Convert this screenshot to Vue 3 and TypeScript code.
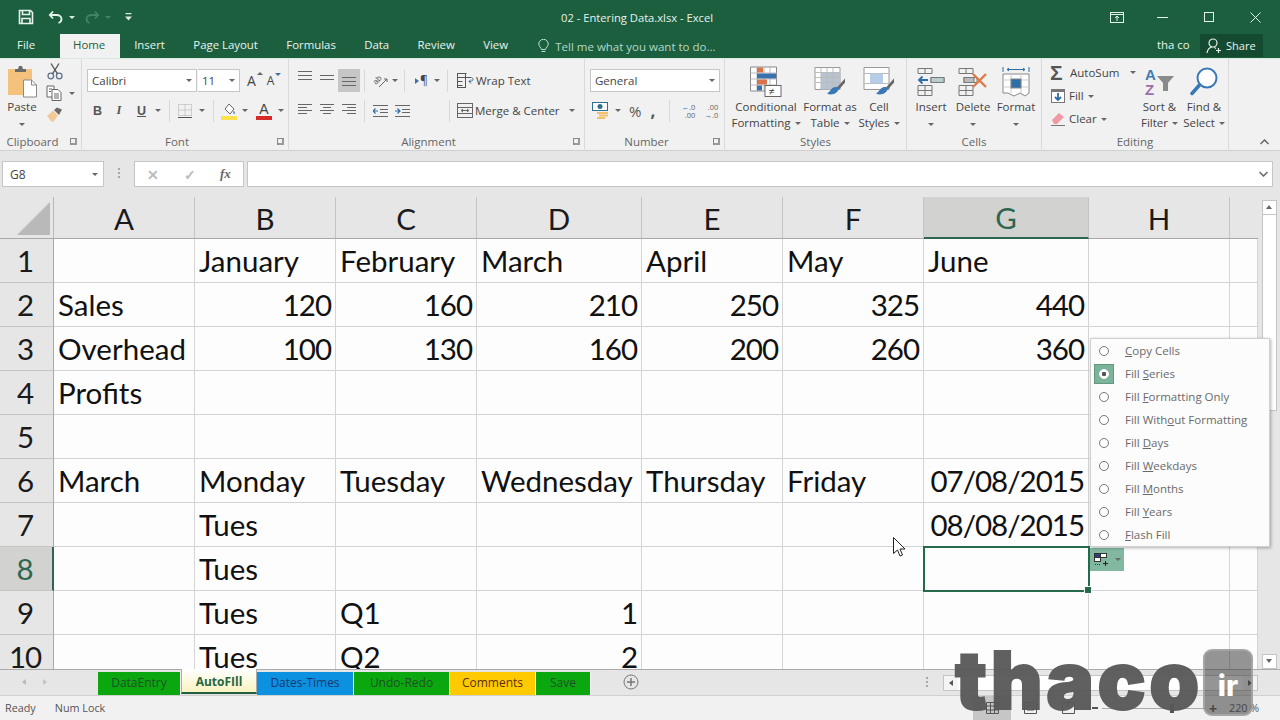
<template>
  <div class="app">
    <header class="titlebar">
      <div class="qat">
        <svg class="qat-save" width="16" height="16" viewBox="0 0 16 16" fill="none" stroke="#e6f2ec" stroke-width="1.6"><path d="M1.5 1.5h11l2 2v11h-13z" /><path d="M4.5 1.5v4h7v-4M4 14.5v-5h8v5" /></svg>
        <svg class="qat-undo" width="16" height="14" viewBox="0 0 16 14" fill="none" stroke="#e6f2ec" stroke-width="1.8"><path d="M5 1.5 1.8 5 5 8.5" /><path d="M2 5h6.5c3 0 5 1.8 5 4s-1.2 3.4-3 4" /></svg>
        <i class="caret caret-light qat-caret1"></i>
        <svg class="qat-redo" width="16" height="14" viewBox="0 0 16 14" fill="none" stroke="#3f8465" stroke-width="1.8"><path d="m11 1.5 3.2 3.5L11 8.5" /><path d="M14 5H7.5c-3 0-5 1.8-5 4s1.2 3.4 3 4" /></svg>
        <i class="caret caret-dim qat-caret2"></i>
        <svg class="qat-more" width="7" height="8" viewBox="0 0 7 8" fill="#dcebe4"><rect x="0.5" width="6" height="1.2" /><path d="M0 3.5h7L3.5 7.5z" /></svg>
      </div>
      <div class="doc-title">02 - Entering Data.xlsx - Excel</div>
      <div class="win-btns">
        <svg width="14" height="11" viewBox="0 0 14 11" fill="none" stroke="#e6f2ec"><rect x="0.5" y="0.5" width="13" height="10" /><path d="M0.5 2.5h13M7 9V4M5 6l2-2 2 2" /></svg>
        <svg class="win-min" width="11" height="1" viewBox="0 0 11 1"><rect width="11" height="1" fill="#e6f2ec" /></svg>
        <svg class="win-max" width="10" height="10" viewBox="0 0 10 10" fill="none" stroke="#e6f2ec"><rect x="0.5" y="0.5" width="9" height="9" /></svg>
        <svg class="win-close" width="11" height="11" viewBox="0 0 11 11" fill="none" stroke="#e6f2ec"><path d="m0.5 0.5 10 10M10.5 0.5l-10 10" /></svg>
      </div>
    </header>

    <nav class="tabs">
      <span class="tab tab-file">File</span>
      <span v-for="t in ribbonTabs" :key="t" class="tab" :class="{ active: t === 'Home' }">{{ t }}</span>
      <svg class="bulb" width="11" height="15" viewBox="0 0 11 15" fill="none" stroke="#bfe0cf"><path d="M3.5 10.5C3 8.5.8 7.5.8 5a4.7 4.7 0 0 1 9.4 0c0 2.5-2.2 3.5-2.7 5.5z" /><path d="M3.5 12.5h4" /></svg>
      <span class="tell">Tell me what you want to do...</span>
      <span class="user">tha co</span>
      <span class="share">
        <svg width="16" height="16" viewBox="0 0 16 16" fill="none" stroke="#e6f2ec" stroke-width="1.2"><circle cx="7" cy="5" r="4" /><path d="M1 15c.5-3.5 2.5-5.5 5-6M8 9.5c.8.2 1.5.6 2 1M12.5 10v5M10 12.5h5" /></svg>
        Share
      </span>
    </nav>

    <section class="ribbon">
      <div class="group g-clip">
        <div class="body clip-body">
          <div class="big paste">
            <svg width="30" height="32" viewBox="0 0 30 32"><rect x="1" y="3" width="24" height="26" fill="#f5c27d" /><path d="M8 3h3l1-3h3l1 3h3v3H8z" fill="#6b6b6b" /><path d="M16.5 14h8l5 5v12h-13z" fill="#fff" stroke="#8a8a8a" /><path d="M24.5 14v5h5" fill="none" stroke="#8a8a8a" /></svg>
            <span class="big-text">Paste</span>
            <i class="caret big-caret"></i>
          </div>
          <div class="clip-tools">
            <svg width="16" height="17" viewBox="0 0 16 17" fill="none" stroke="#5f7488" stroke-width="1.3"><circle cx="3.8" cy="13" r="2.8" /><circle cx="12.2" cy="13" r="2.8" /><path d="M5.5 10.8 12 .5M10.5 10.8 4 .5" stroke="#555" /></svg>
            <div class="copy">
              <svg width="16" height="16" viewBox="0 0 16 16" fill="#fff" stroke="#666"><path d="M1 1h7v11H1z" /><path d="M6 4.5h6l3 3v8H6z" /><path d="M3 4h3M3 6.5h2M8 9h5M8 11h5M8 13h5" fill="none" /></svg>
              <i class="caret"></i>
            </div>
            <svg width="16" height="15" viewBox="0 0 16 15"><path d="M0 9 6 3.5l5 5L6 15c-2-.5-3-1.5-3.5-3z" fill="#f3c99a" /><path d="m7 3 3-2.5 5 2-3 5.5z" fill="#6a6a6a" /></svg>
          </div>
        </div>
        <div class="label launcher">Clipboard<i class="launch"></i></div>
      </div>

      <div class="group g-font">
        <div class="body rows font-body">
          <div class="row">
            <div class="select select-font">Calibri<i class="caret"></i></div>
            <div class="select select-size">11<i class="caret"></i></div>
            <span class="grow-a">A<i class="tri-up"></i></span>
            <span class="shrink-a">A<i class="tri-down"></i></span>
          </div>
          <div class="row font-row2">
            <b class="fmt f-b">B</b>
            <em class="fmt f-i">I</em>
            <u class="fmt f-u">U</u>
            <i class="caret c-u"></i>
            <i class="sep s-a"></i>
            <svg class="ic-border" width="14" height="14" viewBox="0 0 14 14" fill="none" stroke="#aaa" stroke-dasharray="1 1"><path d="M.5.5h13v11H.5zM7 .5v11M.5 6h13" /><path d="M0 13.5h14" stroke="#555" stroke-dasharray="none" /></svg>
            <i class="caret c-b"></i>
            <i class="sep s-b"></i>
            <svg class="ic-fill" width="17" height="18" viewBox="0 0 17 18"><path d="m4 7 4-5 5 5-4 5z" fill="#fff" stroke="#666" /><path d="M12.5 8.5c1.5 1.5 2 3 1 3.5s-1.8-1-1-3.5z" fill="#5b8fc7" /><rect y="14" width="16" height="4" fill="#ffe14d" /></svg>
            <i class="caret c-f"></i>
            <span class="ic-color">A<i class="color-bar"></i></span>
            <i class="caret c-c"></i>
          </div>
        </div>
        <div class="label launcher">Font<i class="launch"></i></div>
      </div>

      <div class="group g-align">
        <div class="body rows align-body">
          <div class="row">
            <span class="al"><i class="lines top"></i></span>
            <span class="al"><i class="lines mid"></i></span>
            <span class="al on"><i class="lines bot"></i></span>
            <i class="sep s-c"></i>
            <svg class="ic-orient" width="15" height="15" viewBox="0 0 15 15" fill="none" stroke="#555"><text x="0" y="9" font-size="8" fill="#555" stroke="none" transform="rotate(-45 5 7)" font-family="Liberation Sans">ab</text><path d="M6 14 14 6M14 6h-3M14 6v3" stroke="#666" /></svg>
            <i class="caret c-o"></i>
            <i class="sep s-d"></i>
            <span class="pilcrow"><i class="tri-right"></i>¶</span>
            <i class="caret c-p"></i>
            <i class="sep s-e"></i>
            <svg class="ic-wrap" width="17" height="15" viewBox="0 0 17 15" fill="none" stroke="#555"><path d="M.5.5h9M.5 4.5h14M.5 8.5h5M.5 12.5h5" /><rect x=".5" y=".5" width="8" height="14" /><path d="M15 4.5c2 2 1 4-3 4M12 8.5l2-2M12 8.5l2 2" stroke="#3c6c9c" /></svg>
            <span class="tool-text">Wrap Text</span>
          </div>
          <div class="row">
            <span class="al"><i class="lines left"></i></span>
            <span class="al"><i class="lines center"></i></span>
            <span class="al"><i class="lines right"></i></span>
            <i class="sep s-c"></i>
            <svg class="ic-indent-a" width="15" height="12" viewBox="0 0 15 12" fill="none" stroke="#666"><path d="M0 .5h15M7 4.5h8M7 7.5h8M0 11.5h15" /><path d="M5 6H0M2.5 3.5 0 6l2.5 2.5" stroke="#2c6da8" stroke-width="1.2" /></svg>
            <svg class="ic-indent-b" width="15" height="12" viewBox="0 0 15 12" fill="none" stroke="#666"><path d="M0 .5h15M7 4.5h8M7 7.5h8M0 11.5h15" /><path d="M0 6h5M2.5 3.5 5 6 2.5 8.5" stroke="#2c6da8" stroke-width="1.2" /></svg>
            <i class="sep s-f"></i>
            <svg class="ic-merge" width="16" height="15" viewBox="0 0 16 15" fill="none" stroke="#666"><rect x=".5" y=".5" width="15" height="14" /><path d="M.5 4.5h15M.5 10.5h15M5 7.5h6M4 7.5l2-1.500M4 7.5 6 9M12 7.5 10 6M12 7.5 10 9" /></svg>
            <span class="tool-text">Merge &amp; Center</span>
            <i class="caret c-m"></i>
          </div>
        </div>
        <div class="label launcher">Alignment<i class="launch"></i></div>
      </div>

      <div class="group g-num">
        <div class="body rows num-body">
          <div class="row"><div class="select select-num">General<i class="caret"></i></div></div>
          <div class="row num-row2">
            <svg class="ic-cur" width="17" height="17" viewBox="0 0 17 17"><rect x=".5" y=".5" width="15" height="8" fill="#fff" stroke="#2e6f8e" /><circle cx="8" cy="4.5" r="2.5" fill="#2e6f8e" /><rect x="5" y="10" width="11" height="2" fill="#f0c070" /><rect x="7" y="12.5" width="9" height="2" fill="#f0c070" /><rect x="5" y="15" width="8" height="2" fill="#f0c070" /></svg>
            <i class="caret c-cur"></i>
            <span class="pct">%</span>
            <span class="comma">,</span>
            <i class="sep s-n"></i>
            <span class="dec"><span><i class="dec-arrow">←</i>.0</span><span>.00</span></span>
            <span class="dec dec2"><span>.00</span><span><i class="dec-arrow">→</i>.0</span></span>
          </div>
        </div>
        <div class="label launcher">Number<i class="launch"></i></div>
      </div>

      <div class="group g-styles">
        <div class="body bigs">
          <div class="big b-cond">
            <svg width="32" height="31" viewBox="0 0 32 31"><path d="M.5.5h26v24H.5z" fill="#fff" stroke="#888" /><path d="M.5 6.5h26M.5 12.5h26M.5 18.5h26M7 .5v24M14 .5v24M20 .5v24" stroke="#bbb" /><rect x="7" y="1" width="6" height="5" fill="#d9734a" /><rect x="7" y="7" width="19" height="5" fill="#3b72ad" /><rect x="7" y="13" width="10" height="5" fill="#d9734a" /><rect x="7" y="19" width="5" height="5" fill="#3b72ad" /><rect x="15" y="19" width="16" height="11" fill="#fff" stroke="#666" /><text x="19" y="28" font-size="10" fill="#333" font-family="Liberation Sans">≠</text></svg>
            <span class="big-text">Conditional<br />Formatting<i class="caret inline"></i></span>
          </div>
          <div class="big b-table">
            <svg width="32" height="31" viewBox="0 0 32 31"><path d="M1 1h25v22H1z" fill="#fff" stroke="#999" /><path d="M7 6h19v17H7z" fill="#b7c3d0" /><path d="M1 6h25M1 11h25M1 16h25M7 1v22M13 1v22M19 1v22" stroke="#bbb" /><path d="m31 12-8 9 2 2 6-7z" fill="#666" /><path d="M25 22c-1-2-5-2-7 0s-3 4-5 5c4 2 10 1 12-5z" fill="#3a78b5" /></svg>
            <span class="big-text">Format as<br />Table<i class="caret inline"></i></span>
          </div>
          <div class="big b-style">
            <svg width="32" height="31" viewBox="0 0 32 31"><path d="M1 1h25v22H1z" fill="#fff" stroke="#999" /><path d="M1 7h25M1 17h25" stroke="#bbb" /><rect x="7" y="7" width="13" height="10" fill="#b7cce6" /><path d="m31 12-8 9 2 2 6-7z" fill="#666" /><path d="M25 22c-1-2-5-2-7 0s-3 4-5 5c4 2 10 1 12-5z" fill="#3a78b5" /></svg>
            <span class="big-text">Cell<br />Styles<i class="caret inline"></i></span>
          </div>
        </div>
        <div class="label">Styles</div>
      </div>

      <div class="group g-cells">
        <div class="body bigs">
          <div class="big b-ins">
            <svg width="28" height="28" viewBox="0 0 28 28" fill="none" stroke="#777"><path d="M1 .5h14v5H1zM8 .5v5M1 17.5h14v10H1zM1 22.5h14M8 17.5v10M14 9.5h13v5H14zM20.5 9.5v5" /><rect x="14" y="9.5" width="13" height="5" fill="#bcc" /><path d="M11 12H2M5.5 8.5 2 12l3.5 3.5" stroke="#2c6da8" stroke-width="1.8" /></svg>
            <span class="big-text">Insert</span>
            <i class="caret big-caret"></i>
          </div>
          <div class="big b-del">
            <svg width="30" height="28" viewBox="0 0 30 28" fill="none" stroke="#777"><path d="M1 .5h14v5H1zM8 .5v5M1 17.5h14v10H1zM1 22.5h14M8 17.5v10M6 9.5h13v5H6z" /><rect x="6" y="9.5" width="10" height="5" fill="#bbb" /><path d="m15 6 13 13M28 6 15 19" stroke="#e07a4a" stroke-width="2.4" /></svg>
            <span class="big-text">Delete</span>
            <i class="caret big-caret"></i>
          </div>
          <div class="big b-fmt">
            <svg width="28" height="30" viewBox="0 0 28 30" fill="none" stroke="#888"><path d="M1 0v5M27 0v5M5 2.5h18M5 2.5l2-1.5M5 2.5 7 4M23 2.5 21 1M23 2.5 21 4" stroke="#2c6da8" /><path d="M1 7h26v19l-4 3-5-3-6 3-6-3H1z" fill="#fff" /><path d="M1 13h26M1 20h26M9 7v19M19 7v19" stroke="#ccc" /><rect x="9" y="12" width="10" height="9" fill="#2f6ea8" /></svg>
            <span class="big-text">Format</span>
            <i class="caret big-caret"></i>
          </div>
        </div>
        <div class="label">Cells</div>
      </div>

      <div class="group g-edit">
        <div class="body edit-body">
          <div class="edit-col">
            <div class="edit-row">
              <span class="sigma">Σ</span><span class="tool-text">AutoSum</span><i class="caret c-sum"></i>
            </div>
            <div class="edit-row">
              <svg width="14" height="14" viewBox="0 0 14 14"><rect x=".5" y=".5" width="13" height="13" fill="#fff" stroke="#777" /><rect width="14" height="3" fill="#777" /><path d="M7 4v7M4 8l3 3 3-3" fill="none" stroke="#2c6da8" stroke-width="1.8" /></svg>
              <span class="tool-text">Fill<i class="caret inline"></i></span>
            </div>
            <div class="edit-row">
              <svg width="14" height="14" viewBox="0 0 14 14"><path d="M1 8 8 1l5 4-7 7H3z" fill="#ef9aa4" /><path d="M0 13.5h14" stroke="#777" /></svg>
              <span class="tool-text">Clear<i class="caret inline"></i></span>
            </div>
          </div>
          <div class="big b-sort">
            <svg width="31" height="30" viewBox="0 0 31 30"><text x="1" y="13" font-size="15" font-weight="700" fill="#3f7cb8" font-family="Liberation Sans">A</text><text x="1" y="28" font-size="15" font-weight="700" fill="#9a6fa8" font-family="Liberation Sans">Z</text><path d="M13 9h17l-6 7v8h-5v-8z" fill="#8a8a8a" /></svg>
            <span class="big-text">Sort &amp;<br />Filter<i class="caret inline"></i></span>
          </div>
          <div class="big b-find">
            <svg width="28" height="30" viewBox="0 0 28 30" fill="none"><circle cx="17" cy="11" r="9.5" stroke="#3a78b5" stroke-width="2" fill="#fff" /><path d="M9.5 18 2 26.5" stroke="#3a78b5" stroke-width="3.5" stroke-linecap="round" /></svg>
            <span class="big-text">Find &amp;<br />Select<i class="caret inline"></i></span>
          </div>
        </div>
        <div class="label">Editing</div>
      </div>

      <svg class="collapse" width="9" height="6" viewBox="0 0 9 6" fill="none" stroke="#666" stroke-width="1.5"><path d="m.5 5 4-4 4 4" /></svg>
    </section>

    <section class="formula">
      <div class="namebox">G8<i class="caret"></i></div>
      <div class="dots"></div>
      <div class="fx-box">
        <span class="fx-x">✕</span>
        <span class="fx-v">✓</span>
        <span class="fx">fx</span>
      </div>
      <div class="input-box">
        <svg width="9" height="6" viewBox="0 0 9 6" fill="none" stroke="#666" stroke-width="1.5"><path d="m.5 1 4 4 4-4" /></svg>
      </div>
    </section>

    <main class="sheet-area">
      <div class="grid">
        <div class="corner"><i class="corner-tri"></i></div>
        <div v-for="c in columns" :key="c" class="col-h" :class="{ sel: c === 'G', blank: !c }">{{ c }}</div>
        <template v-for="(row, r) in rows" :key="r">
          <div class="row-h" :class="{ sel: r === 7 }">{{ r + 1 }}</div>
          <div
            v-for="(cell, c) in paddedRow(row)"
            :key="c"
            class="cell"
            :class="{ num: isRight(cell), selected: r === 7 && c === 6 }"
          >
            {{ cell }}<i v-if="r === 7 && c === 6" class="handle"></i>
          </div>
        </template>
      </div>
      <div class="vscroll">
        <div class="sb-btn"><i class="tri-up dark"></i></div>
        <div class="sb-thumb"></div>
        <div class="sb-track"></div>
        <div class="sb-btn"><i class="tri-down dark"></i></div>
      </div>
    </main>

    <section class="sheetbar">
      <div class="sheet-nav"><i class="tri-left"></i><i class="tri-right pale"></i></div>
      <div class="sheet-tabs">
        <span v-for="s in sheets" :key="s.name" class="sheet" :class="s.cls">{{ s.name }}</span>
      </div>
      <svg class="add-sheet" width="16" height="16" viewBox="0 0 16 16" fill="none" stroke="#777"><circle cx="8" cy="8" r="7" /><path d="M8 4v8M4 8h8" stroke-width="1.5" /></svg>
      <div class="hdots"></div>
      <div class="hscroll">
        <span class="hs-btn"><i class="tri-left dark"></i></span>
        <span class="hs-btn"><i class="tri-right dark"></i></span>
      </div>
    </section>

    <footer class="status">
      <span>Ready</span>
      <span class="numlock">Num Lock</span>
      <div class="view-btns">
        <span class="view on">
          <svg width="13" height="12" viewBox="0 0 13 12" fill="none" stroke="#555"><path d="M.5.5h12v11H.5zM.5 4h12M.5 8h12M4.5.5v11M8.5.5v11" /></svg>
        </span>
        <span class="view">
          <svg width="13" height="12" viewBox="0 0 13 12" fill="none" stroke="#555"><path d="M.5.5h12v11H.5zM3 4h7v4H3z" /></svg>
        </span>
        <span class="view">
          <svg width="13" height="12" viewBox="0 0 13 12" fill="none" stroke="#555"><path d="M.5.5h12v11H.5zM6.5.5v4" /></svg>
        </span>
      </div>
      <div class="zoom-slider"><i class="z-minus"></i><i class="z-line"><b class="z-thumb"></b></i><span class="z-plus">+</span></div>
      <span class="zoom-pct">220 %</span>
    </footer>

    <!-- fill options menu, sits over the grid -->
    <div class="fill-menu">
      <div v-for="(o, i) in fillOptions" :key="i" class="fill-item">
        <span class="radio-wrap" :class="{ on: i === 1 }"><i class="radio"></i></span>
        <span>{{ o[0] }}<u>{{ o[1] }}</u>{{ o[2] }}</span>
      </div>
    </div>
    <div class="smart-tag">
      <svg width="15" height="14" viewBox="0 0 15 14" fill="none" stroke="#333"><rect x=".5" y=".5" width="6" height="4" fill="#2b3f7a" /><rect x="6.5" y=".5" width="6" height="4" fill="#fff" /><rect x=".5" y="4.5" width="6" height="4" fill="#fff" /><path d="M1 11.5h6" stroke-dasharray="1 1" /><path d="M11.5 8v5M9 10.5h5" stroke="#222" /></svg>
      <i class="caret"></i>
    </div>

    <svg class="pointer" width="13" height="20" viewBox="0 0 13 20"><path d="M.5.5v16l4-3.5 2.5 6 2.5-1-2.5-6h5z" fill="#fff" stroke="#222" /></svg>

    <!-- channel logo burned into the recording -->
    <div class="logo-box">ir</div>
    <div class="logo-text">thaco</div>
  </div>
</template>

<script setup lang="ts">
type Cell = string | number

const ribbonTabs = ['Home', 'Insert', 'Page Layout', 'Formulas', 'Data', 'Review', 'View']
const columns = ['A', 'B', 'C', 'D', 'E', 'F', 'G', 'H', '']

const rows: Cell[][] = [
  ['', 'January', 'February', 'March', 'April', 'May', 'June'],
  ['Sales', 120, 160, 210, 250, 325, 440],
  ['Overhead', 100, 130, 160, 200, 260, 360],
  ['Profits'],
  [],
  ['March', 'Monday', 'Tuesday', 'Wednesday', 'Thursday', 'Friday', '07/08/2015'],
  ['', 'Tues', '', '', '', '', '08/08/2015'],
  ['', 'Tues'],
  ['', 'Tues', 'Q1', 1],
  ['', 'Tues', 'Q2', 2]
]

const sheets = [
  { name: 'DataEntry', cls: 'green' },
  { name: 'AutoFIll', cls: 'current' },
  { name: 'Dates-Times', cls: 'blue' },
  { name: 'Undo-Redo', cls: 'green' },
  { name: 'Comments', cls: 'yellow' },
  { name: 'Save', cls: 'green' }
]

// before, underlined access key, after
const fillOptions = [
  ['', 'C', 'opy Cells'],
  ['Fill ', 'S', 'eries'],
  ['Fill ', 'F', 'ormatting Only'],
  ['Fill With', 'o', 'ut Formatting'],
  ['Fill ', 'D', 'ays'],
  ['Fill ', 'W', 'eekdays'],
  ['Fill ', 'M', 'onths'],
  ['Fill ', 'Y', 'ears'],
  ['', 'F', 'lash Fill']
]

function paddedRow(row: Cell[]): Cell[] {
  return Array.from({ length: 9 }, (_, i) => row[i] ?? '')
}

function isRight(cell: Cell): boolean {
  return typeof cell === 'number' || cell.includes('/')
}
</script>

<style>
html,
body {
  margin: 0;
  background: #e6e6e6;
}
</style>

<style scoped>
.app {
  position: relative;
  width: 1280px;
  height: 720px;
  overflow: hidden;
  display: flex;
  flex-direction: column;
  font-family: 'Open Sans', 'Liberation Sans', sans-serif;
  font-size: 11.5px;
  color: #444;
}

i {
  font-style: normal;
}

/* title bar */
.titlebar {
  height: 34px;
  flex: none;
  background: #1b5f3f;
  display: flex;
  align-items: center;
  position: relative;
  color: #e8f2ed;
}
.qat {
  display: flex;
  align-items: center;
  padding-left: 18px;
  height: 28px;
}
.qat-undo {
  margin-left: 14px;
}
.qat-caret1 {
  margin-left: 5px;
}
.qat-redo {
  margin-left: 9px;
}
.qat-caret2 {
  margin-left: 5px;
}
.qat-more {
  margin-left: 14px;
}
.doc-title {
  position: absolute;
  left: 561px;
  top: 10px;
  font-size: 11.2px;
  white-space: nowrap;
}
.win-btns {
  margin-left: auto;
  padding-right: 19px;
  height: 28px;
  display: flex;
  align-items: center;
}
.win-min {
  margin-left: 33px;
}
.win-max {
  margin-left: 36px;
}
.win-close {
  margin-left: 36px;
}

.caret {
  display: inline-block;
  width: 0;
  height: 0;
  border-left: 3px solid transparent;
  border-right: 3px solid transparent;
  border-top: 3px solid #666;
  flex: none;
}
.caret.inline {
  margin-left: 4px;
  vertical-align: 2px;
}
.caret-light {
  border-top-color: #dcebe4;
}
.caret-dim {
  border-top-color: #3f8465;
}

/* ribbon tabs */
.tabs {
  height: 24px;
  flex: none;
  background: #1b5f3f;
  display: flex;
  align-items: center;
  color: #eaf3ee;
  position: relative;
  font-size: 11.4px;
}
.tab {
  height: 24px;
  line-height: 22px;
  padding: 0 14.2px;
  white-space: nowrap;
}
.tab-file {
  width: 60px;
  padding: 0 0 0 17px;
  box-sizing: border-box;
}
.tab.active {
  background: #f1f1f1;
  color: #1b5f3f;
  padding: 0 13px;
  width: 60px;
  box-sizing: border-box;
}
.bulb {
  margin-left: 16px;
}
.tell {
  margin-left: 6px;
  color: #b7d8c7;
  white-space: nowrap;
  font-size: 11.5px;
}
.user {
  position: absolute;
  left: 1157px;
  top: 0;
  line-height: 22px;
}
.share {
  position: absolute;
  left: 1200px;
  top: 0;
  width: 63px;
  height: 23px;
  background: #134a30;
  display: flex;
  align-items: center;
  gap: 4px;
  padding-left: 6px;
  box-sizing: border-box;
  font-size: 11px;
}

/* ribbon */
.ribbon {
  height: 93px;
  flex: none;
  background: #f1f1f1;
  border-top: 1px solid #d9ecdf;
  border-bottom: 1px solid #d0d0d0;
  box-sizing: border-box;
  display: flex;
  position: relative;
}
.group {
  height: 92px;
  box-sizing: border-box;
  border-right: 1px solid #dadada;
  display: flex;
  flex-direction: column;
}
.g-clip {
  width: 82px;
}
.g-font {
  width: 207px;
}
.g-align {
  width: 296px;
}
.g-num {
  width: 140px;
}
.g-styles {
  width: 182px;
}
.g-cells {
  width: 135px;
}
.g-edit {
  width: 187px;
}
.body {
  height: 74px;
  flex: none;
}
.label {
  height: 16px;
  line-height: 17px;
  text-align: center;
  color: #666;
  font-size: 11.5px;
  position: relative;
}
.label.launcher {
  padding-right: 16px;
}
.launch {
  position: absolute;
  right: 4px;
  top: 5px;
  width: 6px;
  height: 6px;
  border-left: 1px solid #888;
  border-top: 1px solid #888;
  box-shadow: inset -2px -2px 0 #999;
}
.rows {
  padding-top: 10px;
  box-sizing: border-box;
  display: flex;
  flex-direction: column;
  gap: 7px;
}
.row {
  height: 23px;
  display: flex;
  align-items: center;
}
.select {
  height: 23px;
  box-sizing: border-box;
  background: #fff;
  border: 1px solid #c6c6c6;
  display: flex;
  align-items: center;
  justify-content: space-between;
  padding: 0 4px;
  font-size: 11.5px;
}
.sep {
  width: 1px;
  height: 22px;
  background: #d8d8d8;
  flex: none;
}

/* big ribbon buttons */
.big {
  display: flex;
  flex-direction: column;
  align-items: center;
  flex: none;
  text-align: center;
  padding-top: 7px;
  box-sizing: border-box;
  height: 74px;
}
.big svg {
  height: 32px;
  flex: none;
}
.big-text {
  margin-top: 1px;
  line-height: 16px;
  white-space: nowrap;
}
.big-caret {
  margin-top: 8px;
}
.bigs {
  display: flex;
}

/* clipboard */
.clip-body {
  display: flex;
}
.paste {
  width: 44px;
}
.clip-tools {
  display: flex;
  flex-direction: column;
  gap: 7px;
  padding: 4px 0 0 2px;
  width: 36px;
}
.clip-tools > svg {
  margin-left: 1px;
}
.copy {
  display: flex;
  align-items: center;
  gap: 7px;
  margin-top: -2px;
  margin-bottom: -1px;
}

/* font */
.font-body {
  padding-left: 5px;
}
.select-font {
  width: 110px;
}
.select-size {
  width: 42px;
  margin-left: 1px;
  border-left: 0;
}
.grow-a,
.shrink-a {
  position: relative;
  font-size: 14px;
  color: #444;
}
.grow-a {
  margin-left: 7px;
}
.shrink-a {
  margin-left: 11px;
  font-size: 12px;
}
.tri-up,
.tri-down {
  position: absolute;
  left: 10px;
  top: 1px;
  width: 0;
  height: 0;
  border-left: 3px solid transparent;
  border-right: 3px solid transparent;
}
.tri-up {
  border-bottom: 3px solid #666;
}
.tri-down {
  border-top: 3px solid #3f6fa5;
  left: 8px;
}
.fmt {
  font-family: 'Liberation Sans', sans-serif;
  font-size: 12.5px;
  color: #555;
  width: 8px;
  text-align: center;
}
.f-b {
  margin-left: 6px;
}
.f-i {
  margin-left: 14px;
  font-family: 'Liberation Serif', serif;
  font-weight: 700;
}
.f-u {
  margin-left: 14px;
  font-weight: 700;
}
.c-u {
  margin-left: 10px;
}
.s-a {
  margin-left: 8px;
}
.ic-border {
  margin-left: 8px;
}
.c-b {
  margin-left: 7px;
}
.s-b {
  margin-left: 8px;
}
.ic-fill {
  margin-left: 7px;
}
.c-f {
  margin-left: 4px;
}
.ic-color {
  margin-left: 8px;
  width: 16px;
  text-align: center;
  font-family: 'Liberation Sans', sans-serif;
  font-size: 14px;
  line-height: 14px;
  color: #444;
  position: relative;
  height: 18px;
}
.color-bar {
  position: absolute;
  left: 0;
  right: 0;
  bottom: 0;
  height: 4px;
  background: #d92a2a;
}
.c-c {
  margin-left: 6px;
}

/* alignment */
.align-body {
  padding-left: 5px;
}
.al {
  width: 22px;
  height: 23px;
  flex: none;
  display: flex;
  align-items: center;
  justify-content: center;
}
.al.on {
  background: #c6c6c6;
}
.lines {
  display: block;
  width: 14px;
  height: 13px;
  position: relative;
  --ln: #666;
  background:
    linear-gradient(var(--ln), var(--ln)) 0 0 / 14px 1px no-repeat,
    linear-gradient(var(--ln), var(--ln)) 0 4px / 14px 1px no-repeat,
    linear-gradient(var(--ln), var(--ln)) 0 8px / 14px 1px no-repeat;
}
.lines.top {
  transform: translateY(-3px);
}
.lines.mid {
  transform: translateY(1px);
  background:
    linear-gradient(var(--ln), var(--ln)) 0 0 / 14px 1px no-repeat,
    linear-gradient(var(--ln), var(--ln)) 0 4px / 14px 1px no-repeat;
}
.lines.bot {
  transform: translateY(3px);
}
.lines.left {
  background:
    linear-gradient(var(--ln), var(--ln)) 0 0 / 14px 1px no-repeat,
    linear-gradient(var(--ln), var(--ln)) 0 3px / 9px 1px no-repeat,
    linear-gradient(var(--ln), var(--ln)) 0 6px / 14px 1px no-repeat,
    linear-gradient(var(--ln), var(--ln)) 0 9px / 9px 1px no-repeat;
}
.lines.center {
  background:
    linear-gradient(var(--ln), var(--ln)) 0 0 / 14px 1px no-repeat,
    linear-gradient(var(--ln), var(--ln)) 3px 3px / 8px 1px no-repeat,
    linear-gradient(var(--ln), var(--ln)) 0 6px / 14px 1px no-repeat,
    linear-gradient(var(--ln), var(--ln)) 3px 9px / 8px 1px no-repeat;
}
.lines.right {
  background:
    linear-gradient(var(--ln), var(--ln)) 0 0 / 14px 1px no-repeat,
    linear-gradient(var(--ln), var(--ln)) 5px 3px / 9px 1px no-repeat,
    linear-gradient(var(--ln), var(--ln)) 0 6px / 14px 1px no-repeat,
    linear-gradient(var(--ln), var(--ln)) 5px 9px / 9px 1px no-repeat;
}
.s-c {
  margin-left: 4px;
}
.ic-orient {
  margin-left: 8px;
}
.c-o {
  margin-left: 4px;
}
.s-d {
  margin-left: 6px;
}
.pilcrow {
  margin-left: 10px;
  font-size: 12px;
  display: flex;
  align-items: center;
  gap: 1px;
  width: 13px;
}
.tri-right,
.tri-left {
  display: inline-block;
  width: 0;
  height: 0;
  border-top: 3px solid transparent;
  border-bottom: 3px solid transparent;
}
.tri-right {
  border-left: 4px solid #3f6fa5;
}
.tri-left {
  border-right: 4px solid #bbb;
}
.tri-right.pale {
  border-left-color: #c4c4c4;
}
.tri-left.dark {
  border-right-color: #555;
}
.tri-right.dark {
  border-left-color: #555;
}
.c-p {
  margin-left: 6px;
}
.s-e {
  margin-left: 7px;
}
.ic-wrap {
  margin-left: 9px;
}
.tool-text {
  margin-left: 2px;
  white-space: nowrap;
}
.ic-indent-a {
  margin-left: 8px;
}
.ic-indent-b {
  margin-left: 7px;
}
.s-f {
  margin-left: 39px;
}
.ic-merge {
  margin-left: 7px;
}
.c-m {
  margin-left: 9px;
}

/* number */
.num-body {
  padding-left: 5px;
}
.select-num {
  width: 130px;
}
.ic-cur {
  margin-left: 2px;
}
.c-cur {
  margin-left: 6px;
}
.pct {
  margin-left: 8px;
  font-size: 15px;
  color: #555;
}
.comma {
  margin-left: 9px;
  font-size: 17px;
  font-weight: 700;
  color: #555;
  line-height: 8px;
}
.s-n {
  margin-left: 14px;
}
.dec {
  margin-left: 7px;
  font-size: 7.5px;
  line-height: 8px;
  width: 18px;
  color: #666;
  white-space: nowrap;
  display: flex;
  flex-direction: column;
  align-items: flex-end;
}
.dec2 {
  margin-left: 5px;
}
.dec-arrow {
  color: #3f6fa5;
}

/* styles, cells */
.g-styles .bigs {
  padding-left: 6px;
}
.b-cond {
  width: 70px;
}
.b-table {
  width: 58px;
}
.b-style {
  width: 40px;
}
.g-cells .bigs {
  padding-left: 3px;
}
.b-ins {
  width: 42px;
}
.b-del {
  width: 42px;
}
.b-fmt {
  width: 44px;
}

/* editing */
.edit-body {
  display: flex;
}
.edit-col {
  width: 95px;
  padding: 2px 0 0 8px;
  box-sizing: border-box;
  flex: none;
}
.edit-row {
  height: 23px;
  display: flex;
  align-items: center;
  gap: 2px;
}
.edit-row svg {
  margin-left: 1px;
}
.sigma {
  font-family: 'Liberation Sans', sans-serif;
  font-size: 21px;
  font-weight: 700;
  line-height: 19px;
  color: #555;
  width: 16px;
}
.c-sum {
  margin-left: 9px;
}
.b-sort {
  width: 45px;
}
.b-find {
  width: 44px;
}
.collapse {
  position: absolute;
  left: 1260px;
  top: 80px;
}

/* formula bar */
.formula {
  height: 46px;
  flex: none;
  background: #e6e6e6;
  box-sizing: border-box;
  padding: 10px 7px 10px 2px;
  display: flex;
}
.namebox {
  width: 102px;
  box-sizing: border-box;
  background: #fff;
  border: 1px solid #c6c6c6;
  display: flex;
  align-items: center;
  justify-content: space-between;
  padding: 0 5px 0 7px;
  font-size: 12px;
}
.dots {
  width: 2px;
  height: 12px;
  margin: 7px 14px 0 14px;
  background: repeating-linear-gradient(#a8a8a8 0 2px, transparent 2px 4px);
}
.fx-box {
  width: 110px;
  box-sizing: border-box;
  background: #fff;
  border: 1px solid #c6c6c6;
  display: flex;
  align-items: center;
  padding-left: 12px;
  color: #bcbcbc;
  font-size: 14px;
  font-weight: 700;
}
.fx-v {
  margin-left: 25px;
}
.fx {
  margin-left: 24px;
  font-family: 'Liberation Serif', serif;
  font-style: italic;
  font-weight: 700;
  color: #666;
  font-size: 13px;
}
.input-box {
  flex: 1;
  margin-left: 3px;
  box-sizing: border-box;
  background: #fff;
  border: 1px solid #c6c6c6;
  display: flex;
  align-items: center;
  justify-content: flex-end;
  padding-right: 4px;
}

/* sheet */
.sheet-area {
  height: 472px;
  flex: none;
  display: flex;
  background: #e6e6e6;
}
.grid {
  width: 1258px;
  height: 472px;
  overflow: hidden;
  display: grid;
  grid-template-columns: 54px 141px 141px 141px 165px 141px 141px 165px 141px 28px;
  grid-template-rows: 42px repeat(10, 44px);
  background: #fdfdfd;
  color: #111;
  font-family: Lato, Carlito, 'Open Sans', sans-serif;
  font-size: 29.5px;
}
.corner {
  background: #e6e6e6;
  border-right: 1px solid #b8b8b8;
  border-bottom: 1px solid #a8a8a8;
  box-sizing: border-box;
  position: relative;
}
.corner-tri {
  position: absolute;
  right: 3px;
  bottom: 3px;
  width: 0;
  height: 0;
  border-left: 33px solid transparent;
  border-bottom: 33px solid #b9b9b9;
}
.col-h,
.row-h {
  background: #e6e6e6;
  box-sizing: border-box;
  display: flex;
  align-items: center;
  justify-content: center;
  color: #1a1a1a;
  overflow: hidden;
}
.col-h {
  border-right: 1px solid #c4c4c4;
  border-bottom: 1px solid #a8a8a8;
  padding-top: 1px;
}
.col-h.blank {
  border-right: 0;
}
.row-h {
  border-right: 1px solid #a8a8a8;
  border-bottom: 1px solid #c4c4c4;
  padding: 0 3px 0 0;
  align-items: flex-start;
  line-height: 44px;
  letter-spacing: -1px;
}
.col-h.sel {
  background: #d2d2d0;
  color: #2f6650;
  border-bottom: 2px solid #2f6650;
}
.row-h.sel {
  background: #d2d2d0;
  color: #2f6650;
  border-right: 2px solid #2f6650;
}
.cell {
  box-sizing: border-box;
  border-right: 1px solid #d4d4d4;
  border-bottom: 1px solid #d4d4d4;
  padding: 0 4px 0 4px;
  line-height: 44px;
  white-space: nowrap;
  position: relative;
  overflow: visible;
  min-width: 0;
}
.cell.num {
  text-align: right;
  letter-spacing: -1px;
}
.cell.selected {
  z-index: 2;
  outline: 2px solid #246b4b;
  outline-offset: -1px;
}
.handle {
  position: absolute;
  right: -4px;
  bottom: -4px;
  width: 6px;
  height: 6px;
  background: #246b4b;
  border: 1px solid #fff;
}

.vscroll {
  width: 15px;
  margin: 3px 0 0 4px;
  display: flex;
  flex-direction: column;
}
.sb-btn {
  height: 15px;
  flex: none;
  background: #fff;
  border: 1px solid #c4c4c4;
  box-sizing: border-box;
  position: relative;
}
.sb-btn .tri-up,
.sb-btn .tri-down {
  left: 3px;
  top: 4px;
}
.tri-up.dark {
  border-bottom: 4px solid #666;
}
.tri-down.dark {
  border-top: 4px solid #666;
}
.sb-thumb {
  height: 196px;
  flex: none;
  background: #fff;
  border: 1px solid #c4c4c4;
  border-top: 0;
  box-sizing: border-box;
}
.sb-track {
  flex: 1;
}

/* sheet tabs */
.sheetbar {
  height: 27px;
  flex: none;
  background: #e6e6e6;
  border-top: 1px solid #ababab;
  border-bottom: 1px solid #d0d0d0;
  box-sizing: border-box;
  display: flex;
  align-items: flex-start;
  position: relative;
}
.sheet-nav {
  width: 98px;
  height: 26px;
  box-sizing: border-box;
  padding: 9px 0 0 22px;
  display: flex;
  align-items: flex-start;
  gap: 17px;
  flex: none;
}
.sheet-tabs {
  display: flex;
  font-size: 12px;
  height: 25px;
}
.sheet {
  height: 23px;
  margin-top: 2px;
  line-height: 22px;
  padding: 0 11px;
  box-sizing: border-box;
  text-align: center;
  border-right: 1px solid #fff;
  white-space: nowrap;
}
.sheet:nth-child(1) {
  width: 83px;
}
.sheet:nth-child(2) {
  width: 76px;
}
.sheet:nth-child(3) {
  width: 97px;
}
.sheet:nth-child(4) {
  width: 96px;
}
.sheet:nth-child(5) {
  width: 86px;
}
.sheet:nth-child(6) {
  width: 55px;
}
.green {
  background: #0aa80e;
  color: #1f4f28;
}
.blue {
  background: #0c90e0;
  color: #183a70;
}
.yellow {
  background: #ffcb00;
  color: #5a2c10;
}
.current {
  height: 25px;
  margin-top: -1px;
  line-height: 25px;
  background: linear-gradient(#fff, #fbf3c0);
  color: #27663f;
  font-weight: 700;
  border: 1px solid #ababab;
  border-top: 0;
  border-bottom: 2px solid #1f5f43;
  font-size: 12px;
  padding: 0;
}
.add-sheet {
  margin: 4px 0 0 32px;
  flex: none;
}
.hdots {
  width: 2px;
  height: 12px;
  margin: 7px 0 0 287px;
  background: repeating-linear-gradient(#a8a8a8 0 2px, transparent 2px 4px);
}
.hscroll {
  width: 315px;
  height: 16px;
  margin: 5px 0 0 15px;
  background: #fff;
  border: 1px solid #c4c4c4;
  box-sizing: border-box;
  display: flex;
  justify-content: space-between;
}
.hs-btn {
  width: 14px;
  display: flex;
  align-items: center;
  justify-content: center;
  background: #f4f4f4;
}

/* status bar */
.status {
  height: 24px;
  flex: none;
  background: #f1f1f1;
  display: flex;
  align-items: center;
  padding: 0 0 2px 5px;
  box-sizing: border-box;
  font-size: 10.8px;
  color: #555;
  position: relative;
}
.numlock {
  margin-left: 19px;
}
.view-btns {
  position: absolute;
  left: 973px;
  top: 0;
  display: flex;
}
.view {
  width: 38px;
  height: 24px;
  box-sizing: border-box;
  display: flex;
  align-items: center;
  justify-content: center;
}
.view.on {
  background: #c6c6c6;
}
.zoom-slider {
  position: absolute;
  left: 1092px;
  top: 0;
  height: 24px;
  width: 125px;
  display: flex;
  align-items: center;
}
.z-minus {
  width: 6px;
  height: 2px;
  background: #555;
}
.z-line {
  width: 106px;
  height: 1px;
  margin-left: 4px;
  background: #aaa;
  position: relative;
}
.z-thumb {
  position: absolute;
  left: 68px;
  top: -4px;
  width: 4px;
  height: 9px;
  background: #555;
}
.z-plus {
  margin-left: 3px;
  font-size: 14px;
  font-weight: 700;
}
.zoom-pct {
  position: absolute;
  left: 1229px;
  top: 4px;
}

/* fill options */
.fill-menu {
  position: absolute;
  left: 1090px;
  top: 338px;
  width: 180px;
  height: 209px;
  box-sizing: border-box;
  background: #fcfcfc;
  border: 1px solid #d0d0d0;
  box-shadow: 1px 1px 3px rgba(0, 0, 0, 0.3);
  z-index: 3;
  font-size: 11.5px;
  color: #6a6a6a;
}
.fill-item {
  height: 23px;
  display: flex;
  align-items: center;
  gap: 11px;
  padding-left: 3px;
  white-space: nowrap;
}
.radio-wrap {
  width: 20px;
  height: 20px;
  display: flex;
  align-items: center;
  justify-content: center;
  flex: none;
}
.radio-wrap.on {
  background: #7db39b;
  border: 1px solid #5f9a80;
  box-sizing: border-box;
}
.radio {
  width: 8px;
  height: 8px;
  border: 1px solid #777;
  border-radius: 50%;
  background: #fff;
  position: relative;
  box-sizing: content-box;
}
.radio-wrap.on .radio {
  background: radial-gradient(circle, #555 0 2px, #fff 2.5px);
  border-color: #fff;
}
.smart-tag {
  position: absolute;
  left: 1090px;
  top: 548px;
  width: 34px;
  height: 23px;
  background: #83b8a0;
  display: flex;
  align-items: center;
  gap: 6px;
  padding: 0 0 0 4px;
  box-sizing: border-box;
  z-index: 2;
}
.pointer {
  position: absolute;
  left: 893px;
  top: 537px;
  z-index: 4;
}

/* logo overlay */
.logo-box {
  position: absolute;
  left: 1203px;
  top: 649px;
  width: 50px;
  height: 67px;
  box-sizing: border-box;
  border: 2px solid rgba(170, 170, 170, 0.8);
  border-radius: 9px;
  background: rgba(60, 60, 60, 0.54);
  color: #fff;
  font-family: Inter, 'Liberation Sans', sans-serif;
  font-weight: 800;
  font-size: 29px;
  text-align: center;
  line-height: 70px;
  z-index: 5;
}
.logo-text {
  position: absolute;
  left: 955px;
  top: 635px;
  font-family: Inter, 'Liberation Sans', sans-serif;
  font-weight: 900;
  font-size: 80px;
  line-height: 90px;
  letter-spacing: 3.5px;
  -webkit-text-stroke: 2px rgb(88, 88, 88);
  paint-order: stroke fill;
  color: rgb(88, 88, 88);
  opacity: 0.95;
  z-index: 5;
}
</style>
